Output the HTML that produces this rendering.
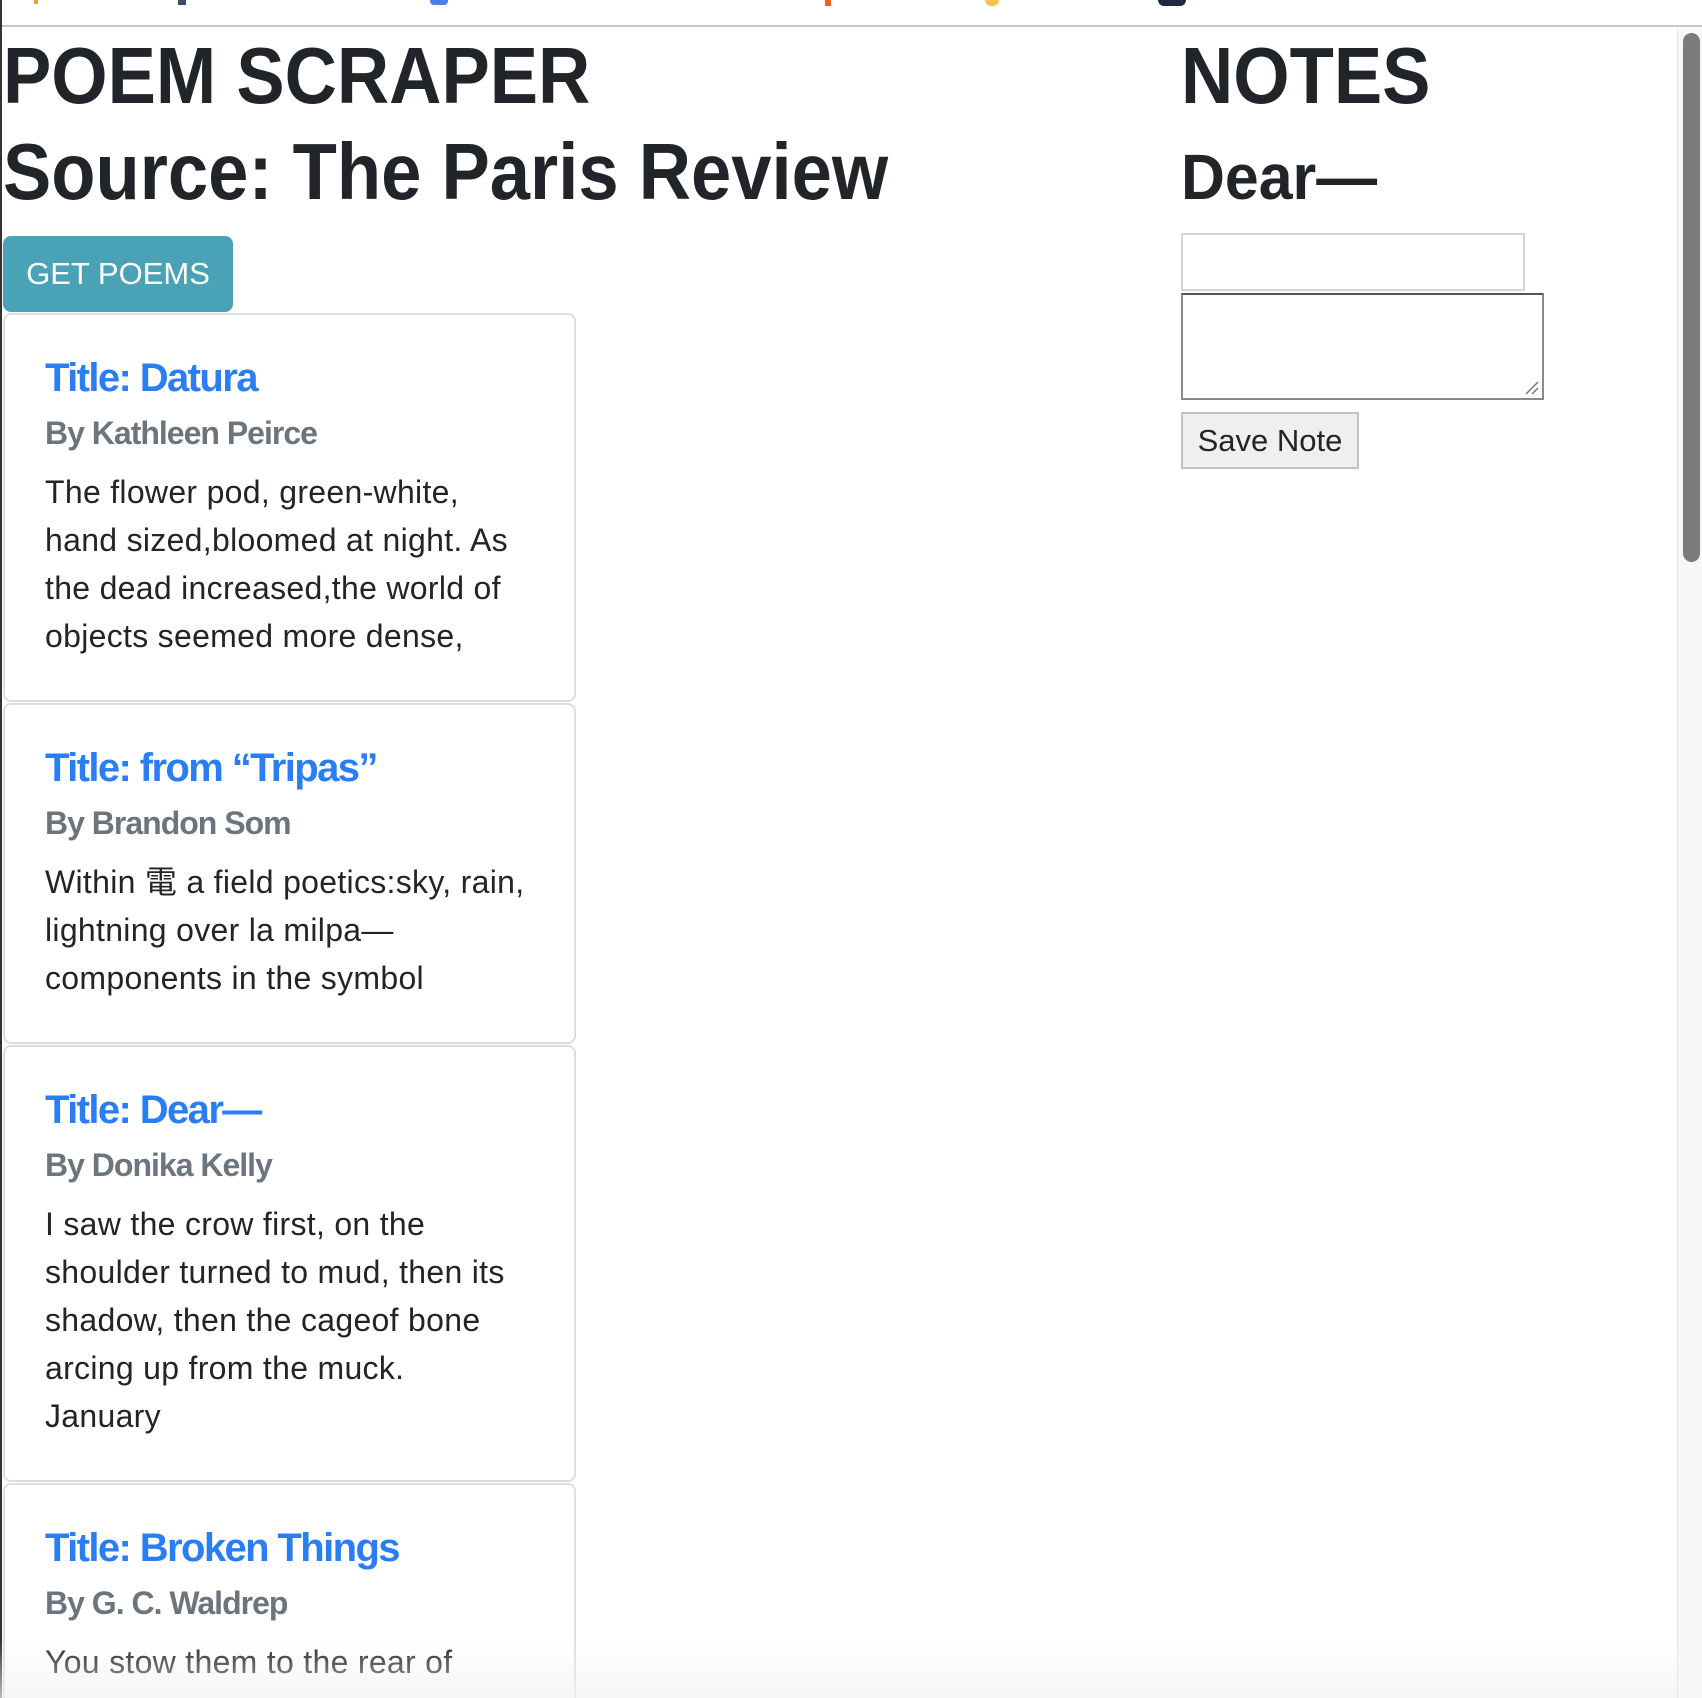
<!DOCTYPE html>
<html><head><meta charset="utf-8"><style>
*{box-sizing:border-box;margin:0;padding:0}
html,body{width:1702px;height:1698px;overflow:hidden;background:#fff}
body{font-family:"Liberation Sans","Noto Sans CJK JP",sans-serif;color:#212529;position:relative}
.abs{position:absolute}
.h1{font-size:80px;line-height:96px;white-space:nowrap;font-weight:bold;transform:scaleX(0.905);transform-origin:0 0}
.h2{font-size:64px;line-height:77px;white-space:nowrap;font-weight:bold;transform:scaleX(0.95);transform-origin:0 0}
.btn{left:3px;top:236px;width:230px;height:76px;background:#4aa2b6;border-radius:8px;color:#fff;font-size:31px;line-height:76px;text-align:center}
.cards{left:3px;top:313px;width:573px;height:1385px;overflow:hidden}
.card{border:2px solid #dedede;border-radius:8px;padding:39px 40px 40px 40px;margin-bottom:1px;background:#fff}
.t{font-size:40px;line-height:48px;color:#2a7ef5;white-space:nowrap;font-weight:bold;letter-spacing:-1.6px}
.s{font-size:32px;line-height:38px;color:#6c757d;margin-top:12px;white-space:nowrap;font-weight:bold;letter-spacing:-1px}
.p{font-size:32px;line-height:48px;margin-top:16px;white-space:nowrap;letter-spacing:0.3px}
</style></head><body>
<div class="abs" style="left:0;top:0;width:1702px;height:27px;background:#fff;border-bottom:2px solid #c6c6c6"></div>
<div class="abs" style="left:34px;top:0;width:4px;height:4px;background:#e8a33a"></div>
<div class="abs" style="left:178px;top:0;width:8px;height:5px;background:#3a4a6a"></div>
<div class="abs" style="left:430px;top:0;width:18px;height:5px;background:#4a7ee8;border-radius:0 0 4px 4px"></div>
<div class="abs" style="left:825px;top:0;width:6px;height:6px;background:#e8622a"></div>
<div class="abs" style="left:985px;top:0;width:14px;height:6px;background:#f4c44a;border-radius:0 0 6px 6px"></div>
<div class="abs" style="left:1158px;top:0;width:28px;height:6px;background:#1e2a44;border-radius:0 0 6px 6px"></div>
<div class="abs" style="left:0;top:0;width:2px;height:1698px;background:#333"></div>

<div class="abs h1" style="left:3px;top:28px">POEM SCRAPER</div>
<div class="abs h1" style="left:3px;top:124px">Source: The Paris Review</div>
<div class="abs btn">GET POEMS</div>

<div class="abs cards">
<div class="card"><div class="t">Title: Datura</div><div class="s">By Kathleen Peirce</div><div class="p">The flower pod, green-white,<br>hand sized,bloomed at night. As<br>the dead increased,the world of<br>objects seemed more dense,</div></div>
<div class="card"><div class="t">Title: from “Tripas”</div><div class="s">By Brandon Som</div><div class="p">Within 電 a field poetics:sky, rain,<br>lightning over la milpa—<br>components in the symbol</div></div>
<div class="card"><div class="t">Title: Dear—</div><div class="s">By Donika Kelly</div><div class="p">I saw the crow first, on the<br>shoulder turned to mud, then its<br>shadow, then the cageof bone<br>arcing up from the muck.<br>January</div></div>
<div class="card"><div class="t">Title: Broken Things</div><div class="s">By G. C. Waldrep</div><div class="p">You stow them to the rear of</div></div>
</div>

<div class="abs h1" style="left:1181px;top:28px">NOTES</div>
<div class="abs h2" style="left:1181px;top:139px">Dear—</div>
<div class="abs" style="left:1181px;top:233px;width:344px;height:58px;border:2px solid #d4d4d4"></div>
<div class="abs" style="left:1181px;top:293px;width:363px;height:107px;border:2px solid #8a8a8a;border-top-color:#555"></div>
<svg class="abs" style="left:1524px;top:380px" width="16" height="16"><path d="M2 14L14 2M8 14L14 8" stroke="#777" stroke-width="1.5"/></svg>
<div class="abs" style="left:1181px;top:412px;width:178px;height:57px;background:#efefef;border:2px solid #c2c2c2;font-size:31px;line-height:53px;text-align:center">Save Note</div>

<div class="abs" style="left:1677px;top:29px;width:25px;height:1669px;background:#f7f7f7;border-left:1px solid #e6e6e6"></div>
<div class="abs" style="left:1683px;top:33px;width:17px;height:529px;background:#7b7b7b;border-radius:9px"></div>
<div class="abs" style="left:0;top:1640px;width:1677px;height:58px;background:linear-gradient(rgba(244,244,244,0),rgba(242,242,242,0.7))"></div>
</body></html>
